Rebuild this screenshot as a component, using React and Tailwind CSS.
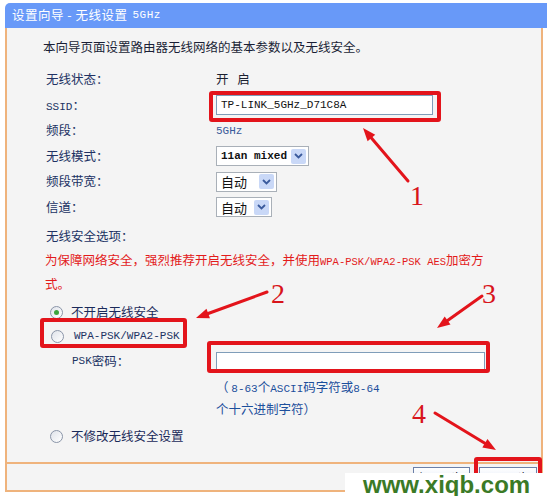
import React from "react";

// one select box in the router form
function Select({ w, children, mono }) {
  return (
    <div className={`h-5 ${w} bg-white border border-[#a9b0b8] flex items-center justify-between pl-[4px] pr-[2px]`}>
      <span className={mono ? "font-['Liberation_Mono',monospace] text-[11px] font-bold text-[#111]" : "text-[13px] text-[#111]"}>{children}</span>
      <span className="w-[15px] h-[15px] bg-[#c9d8f7] rounded-[2px] flex items-center justify-center">
        <svg width="9" height="6" viewBox="0 0 9 6">
          <path d="M1 1 L4.5 4.5 L8 1" fill="none" stroke="#3a5a9c" strokeWidth="1.8" />
        </svg>
      </span>
    </div>
  );
}

function Radio({ checked }) {
  return (
    <span className="w-[13px] h-[13px] shrink-0 rounded-full border border-[#8a95a8] bg-gradient-to-br from-[#dfe3ea] to-white flex items-center justify-center">
      {checked && <span className="w-[5px] h-[5px] rounded-full bg-[#3ca43c]" />}
    </span>
  );
}

function Arrow({ x1, y1, x2, y2 }) {
  const a = Math.atan2(y2 - y1, x2 - x1);
  const len = 13;
  const half = 5;
  const bx = x2 - len * Math.cos(a);
  const by = y2 - len * Math.sin(a);
  const px = -Math.sin(a) * half;
  const py = Math.cos(a) * half;
  return (
    <g>
      <line x1={x1} y1={y1} x2={bx} y2={by} stroke="#e3141b" strokeWidth="3" strokeLinecap="round" />
      <polygon points={`${x2},${y2} ${bx + px},${by + py} ${bx - px},${by - py}`} fill="#e3141b" />
    </g>
  );
}

const mono = "font-['Liberation_Mono',monospace] text-[11px]";

export default function App() {
  return (
    <div className="relative w-[547px] h-[496px] bg-white overflow-hidden font-['Noto_Sans_CJK_SC',sans-serif] text-[12.5px]">
      <div className="pt-[3px] pl-[5px]">
        {/* HEADER */}
        <div className="h-[25px] bg-[#6899f8] rounded-tl-[5px] flex items-center pl-[7px] text-white tracking-[0.5px]">
          设置向导 - 无线设置 <span className="ml-[5px] font-['Liberation_Mono',monospace] text-[11px]">5GHz</span>
        </div>

        {/* BODY */}
        <div className="w-[538px] bg-[#f4f4f4] border-x-2 border-b-2 border-[#efb37c]">
          <div className="h-[434px] pl-[36px] pt-[9px]">
            <p className="h-5 leading-5 text-[#1a1f36]">本向导页面设置路由器无线网络的基本参数以及无线安全。</p>

            <div className="mt-[10px] pl-[3px] grid grid-cols-[170px_1fr] auto-rows-[25.5px] items-center text-[#213263]">
              <span>无线状态：</span>
              <span className="text-[#1a2030] tracking-[3px]">开 启</span>

              <span><span className={mono}>SSID</span>：</span>
              <div className="w-[217px] h-5 bg-white border border-[#7f9db9] flex items-center pl-[4px]">
                <span className={`${mono} text-[#111]`}>TP-LINK_5GHz_D71C8A</span>
              </div>

              <span>频段：</span>
              <span className={`${mono} text-[#3a5a9a]`}>5GHz</span>

              <span>无线模式：</span>
              <Select w="w-[93px]" mono>11an mixed</Select>

              <span>频段带宽：</span>
              <Select w="w-[61px]">自动</Select>

              <span>信道：</span>
              <Select w="w-[56px]">自动</Select>
            </div>

            <p className="mt-[6px] pl-[3px] h-5 leading-5 text-[#213263]">无线安全选项：</p>

            <p className="mt-[3px] pl-[2px] leading-[21px] text-[#e31b1b]">
              为保障网络安全，强烈推荐开启无线安全，并使用<span className="font-['Liberation_Mono',monospace] text-[10.5px]">WPA-PSK/WPA2-PSK AES</span>加密方
              <br />
              式。
            </p>

            <div className="mt-[6px] pl-[7px] h-[24px] flex items-center gap-[8px] text-[#1a2a5a]">
              <Radio checked />
              <span>不开启无线安全</span>
            </div>
            <div className="pl-[8px] h-[25px] flex items-center gap-[10px] text-[#213263]">
              <Radio />
              <span className={mono}>WPA-PSK/WPA2-PSK</span>
            </div>

            <div className="mt-[2px] pl-[3px] grid grid-cols-[170px_1fr] text-[#213263]">
              <span className="pl-[26px] h-[21px] flex items-center">
                <span className={mono}>PSK</span>密码：
              </span>
              <div className="h-[21px] flex items-center">
                <div className="w-[269px] h-[20px] bg-white border border-[#7f9db9]" />
              </div>
              <span />
              <p className="mt-[5px] leading-[19px] text-[#1c4f9c]">
                （ <span className={mono}>8-63</span>个<span className={mono}>ASCII</span>码字符或<span className={mono}>8-64</span>
                <br />
                个十六进制字符）
              </p>
            </div>

            <div className="mt-[6px] pl-[7px] h-[24px] flex items-center gap-[8px] text-[#1a2a5a]">
              <Radio />
              <span>不修改无线安全设置</span>
            </div>
          </div>

          {/* FOOTER */}
          <div className="h-[28px] border-t-2 border-[#efb37c] flex justify-end items-start pt-[3px] pr-[4px] gap-[9px]">
            <button className="w-[57px] h-[22px] border border-[#6b7fa8] bg-gradient-to-b from-white to-[#d6e0f2] text-[#1a2030] tracking-[5px]">上一步</button>
            <button className="w-[58px] h-[22px] border border-[#6b7fa8] bg-gradient-to-b from-white to-[#d6e0f2] text-[#1a2030] tracking-[5px]">下一步</button>
          </div>
        </div>
      </div>

      {/* annotations */}
      <div className="absolute left-[209px] top-[91px] w-[232px] h-[31px] border-[4px] border-[#e3141b] rounded-[3px]" />
      <div className="absolute left-[40px] top-[318px] w-[147px] h-[30px] border-[4px] border-[#e3141b] rounded-[3px]" />
      <div className="absolute left-[207px] top-[341px] w-[283px] h-[32px] border-[4px] border-[#e3141b] rounded-[3px]" />
      <div className="absolute left-[474px] top-[457px] w-[68px] h-[45px] border-[4px] border-[#e3141b] rounded-[3px]" />

      <svg className="absolute inset-0 pointer-events-none" width="547" height="496">
        <Arrow x1={408} y1={181} x2={363} y2={128} />
        <Arrow x1={267} y1={292} x2={196} y2={318} />
        <Arrow x1={482} y1={296} x2={437} y2={328} />
        <Arrow x1={435} y1={413} x2={496} y2={450} />
      </svg>

      <span className="absolute left-[410px] top-[182px] leading-none font-['Liberation_Serif',serif] text-[28px] text-[#d8141b]">1</span>
      <span className="absolute left-[271px] top-[280px] leading-none font-['Liberation_Serif',serif] text-[28px] text-[#d8141b]">2</span>
      <span className="absolute left-[482px] top-[280px] leading-none font-['Liberation_Serif',serif] text-[28px] text-[#d8141b]">3</span>
      <span className="absolute left-[412px] top-[400px] leading-none font-['Liberation_Serif',serif] text-[28px] text-[#d8141b]">4</span>

      {/* watermark */}
      <div className="absolute left-[345px] top-[473px] w-[202px] h-[23px] bg-white pl-[18px] flex items-center font-['Liberation_Sans',sans-serif] font-bold text-[24px] text-[#3b7a26]">
        www.xiqb.com
      </div>
    </div>
  );
}
